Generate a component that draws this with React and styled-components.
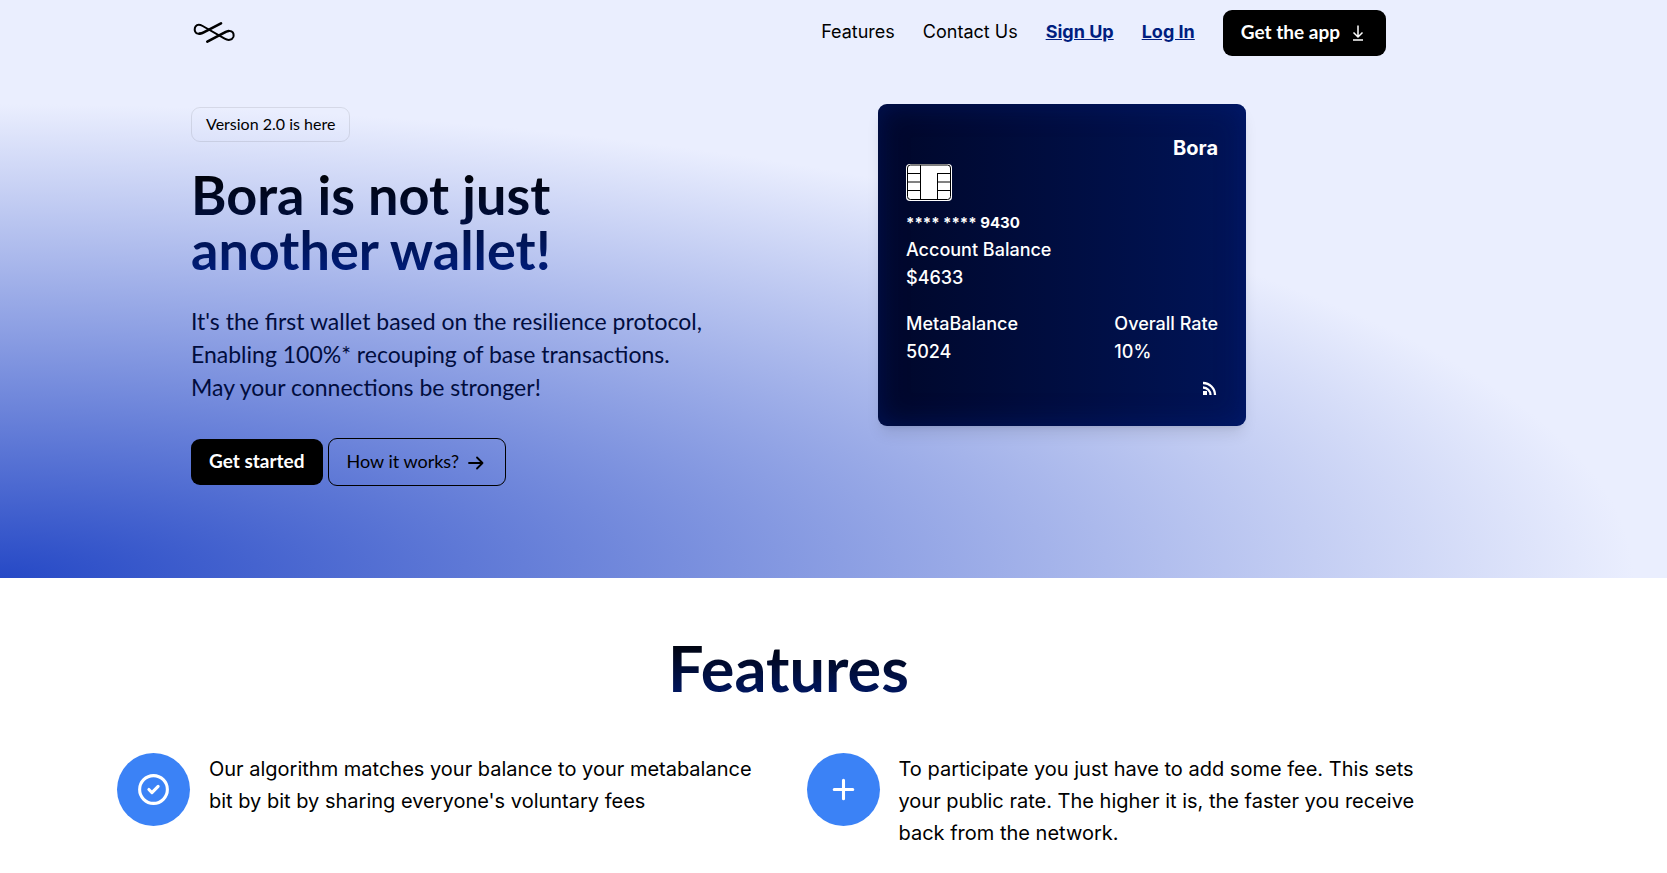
import React from 'react';
import styled, { createGlobalStyle } from 'styled-components';

const GlobalStyle = createGlobalStyle`
  *, *::before, *::after { box-sizing: border-box; }
  body {
    margin: 0;
    background: #fff;
    color: #000;
    font-family: Inter, "Liberation Sans", sans-serif;
  }
  h1, h2, p, dl, dt, dd { margin: 0; }
`;

const displayFont = 'Lato, "Liberation Sans", sans-serif';

const Top = styled.div`
  background: radial-gradient(ellipse 98% 82% at bottom left, #2649c6, #eaeefe);
`;

const Header = styled.header`
  display: flex;
  align-items: center;
  justify-content: space-between;
  padding: 10px 281px 10px 191px;
`;

const LogoLink = styled.a`
  display: flex;
  padding: 0 2px;
  color: #000;
`;

const Nav = styled.nav`
  display: flex;
  align-items: center;
  gap: 28px;
`;

const NavLink = styled.a`
  padding-bottom: 2px;
  color: ${(p) => (p.$strong ? '#001e80' : '#000')};
  font-size: 18px;
  font-weight: ${(p) => (p.$strong ? 700 : 400)};
  line-height: 28px;
  text-decoration: ${(p) => (p.$strong ? 'underline' : 'none')};
  white-space: nowrap;
`;

const Button = styled.button`
  display: inline-flex;
  align-items: center;
  justify-content: center;
  gap: 8px;
  height: ${(p) => (p.$outlined ? '48px' : '46px')};
  padding: 0 18px;
  border: ${(p) => (p.$outlined ? '1px solid #000' : '0')};
  border-radius: 9px;
  background: ${(p) => (p.$outlined ? 'transparent' : '#000')};
  color: ${(p) => (p.$outlined ? '#000' : '#fff')};
  font-family: ${displayFont};
  font-size: ${(p) => (p.$outlined ? '18px' : '19px')};
  font-weight: ${(p) => (p.$outlined ? 400 : 700)};
  white-space: nowrap;
  cursor: pointer;
`;

const ButtonLabel = styled.span`
  padding-bottom: 3px;
`;

const Hero = styled.section`
  display: grid;
  grid-template-columns: 1fr 1fr;
  align-items: start;
  padding: 38px 102px 92px 191px;
`;

const Intro = styled.div`
  display: flex;
  flex-direction: column;
  align-items: flex-start;
  padding-top: 3px;
`;

const Badge = styled.div`
  padding: 0 14px 2px;
  border: 1px solid rgba(34, 34, 34, 0.1);
  border-radius: 9px;
  font-family: ${displayFont};
  font-size: 16px;
  line-height: 31px;
`;

const Title = styled.h1`
  margin-top: 25px;
  background: linear-gradient(to bottom, #000, #001e80);
  background-clip: text;
  color: transparent;
  font-family: ${displayFont};
  font-size: 54px;
  font-weight: 700;
  line-height: 55px;
`;

const Lead = styled.p`
  margin-top: 28px;
  color: #010d3e;
  font-family: ${displayFont};
  font-size: 23px;
  line-height: 33px;
`;

const Actions = styled.div`
  display: flex;
  align-items: center;
  gap: 5px;
  margin-top: 34px;
`;

const Card = styled.article`
  display: flex;
  flex-direction: column;
  width: 368px;
  max-width: 100%;
  padding: 28px;
  border-radius: 9px;
  background: linear-gradient(to right, #00072a, #001458);
  box-shadow:
    inset 0 0 28px rgba(0, 30, 128, 0.5),
    0 10px 15px -3px rgba(0, 0, 0, 0.1),
    0 4px 6px -4px rgba(0, 0, 0, 0.1);
  color: #fff;
`;

const CardBrand = styled.div`
  align-self: flex-end;
  font-size: 20px;
  font-weight: 700;
  line-height: 32px;
`;

const CardNumber = styled.div`
  margin-top: 9px;
  font-size: 15px;
  font-weight: 700;
  line-height: 26px;
`;

const CardRow = styled.dl`
  display: flex;
  justify-content: space-between;
  margin-top: ${(p) => (p.$spaced ? '18px' : '0')};
  font-size: 18px;
  font-weight: 500;
  line-height: 28px;
`;

const CardSignal = styled.div`
  display: flex;
  align-self: flex-end;
  margin-top: 14px;
`;

const Features = styled.section`
  margin-right: 90px;
  padding: 58px 117px 24px;
`;

const SectionTitle = styled.h2`
  width: fit-content;
  margin: 0 auto 53px;
  background: linear-gradient(to bottom, #000, #001e80 120%);
  background-clip: text;
  color: transparent;
  font-family: ${displayFont};
  font-size: 63px;
  font-weight: 700;
  line-height: 64px;
`;

const FeatureGrid = styled.div`
  display: grid;
  grid-template-columns: 1fr 1fr;
  gap: 36px;
`;

const Feature = styled.div`
  display: flex;
  align-items: flex-start;
  gap: 19px;
`;

const FeatureIcon = styled.div`
  display: flex;
  flex: none;
  align-items: center;
  justify-content: center;
  width: 73px;
  height: 73px;
  border-radius: 50%;
  background: #3b82f6;
  color: #fff;
`;

const FeatureText = styled.p`
  max-width: 560px;
  font-size: 20px;
  line-height: 32px;
`;

function Logo() {
  return (
    <svg width="42" height="24" viewBox="38 34 126 72" fill="none" stroke="currentColor" strokeLinecap="round" strokeLinejoin="round" aria-hidden="true">
      <path d="M58 72C44 75 40 60 46 50C51 43 60 45 67 49L133 87C143 93 155 92 159 82C162 71 156 62 145 64" strokeWidth="6" />
      <path d="M122 41L70 68Q64 71 58 72" strokeWidth="8" />
      <path d="M81 96L132 69Q138 65 145 64" strokeWidth="8" />
    </svg>
  );
}

function DownloadIcon() {
  return (
    <svg width="20" height="20" viewBox="0 0 20 20" fill="none" stroke="currentColor" aria-hidden="true">
      <path d="M10 2.5V13.5M5.5 9.5L10 14L14.5 9.5" strokeWidth="1.5" />
      <path d="M5 17H15" strokeWidth="1.5" />
    </svg>
  );
}

function ArrowIcon() {
  return (
    <svg width="20" height="20" viewBox="0 0 20 20" fill="none" stroke="currentColor" strokeWidth="1.8" strokeLinecap="round" strokeLinejoin="round" aria-hidden="true">
      <path d="M2 11H15.5M10 5.5L15.5 11L10 16.5" />
    </svg>
  );
}

function Chip() {
  return (
    <svg width="46" height="37" viewBox="0 0 46 37" fill="none" aria-hidden="true">
      <rect width="46" height="37" rx="4" fill="#fff" />
      <rect x="1.5" y="1" width="43" height="34.5" rx="3" stroke="#000" />
      <path d="M14.5 1V35.5M31.5 9V35.5M1.5 9.5H14.5M1.5 26.5H14.5M31 9.5H44.5M31.5 26.5H44.5" stroke="#000" />
      <path d="M2 18H14M32 18H44" stroke="#808080" strokeWidth="2" />
    </svg>
  );
}

function SignalIcon() {
  return (
    <svg width="18" height="18" viewBox="0 0 18 18" fill="none" stroke="currentColor" strokeWidth="2.3" aria-hidden="true">
      <rect x="3" y="11" width="4" height="4" fill="currentColor" stroke="none" />
      <path d="M3 7.5A7.5 7.5 0 0 1 10.5 15M3 3A12 12 0 0 1 15 15" />
    </svg>
  );
}

function CheckIcon() {
  return (
    <svg width="37" height="37" viewBox="0 0 24 24" fill="none" stroke="currentColor" strokeWidth="2" strokeLinecap="round" strokeLinejoin="round" aria-hidden="true">
      <path d="M9 12l2 2 4-4m6 2a9 9 0 11-18 0 9 9 0 0118 0z" />
    </svg>
  );
}

function PlusIcon() {
  return (
    <svg width="37" height="37" viewBox="0 0 24 24" fill="none" stroke="currentColor" strokeWidth="2" strokeLinecap="round" strokeLinejoin="round" aria-hidden="true">
      <path d="M12 6v12M6 12h12" />
    </svg>
  );
}

const features = [
  {
    Icon: CheckIcon,
    text: "Our algorithm matches your balance to your metabalance bit by bit by sharing everyone's voluntary fees",
  },
  {
    Icon: PlusIcon,
    text: 'To participate you just have to add some fee. This sets your public rate. The higher it is, the faster you receive back from the network.',
  },
];

export default function App() {
  return (
    <>
      <GlobalStyle />
      <Top>
        <Header>
          <LogoLink href="#" aria-label="Bora">
            <Logo />
          </LogoLink>
          <Nav>
            <NavLink href="#features">Features</NavLink>
            <NavLink href="#contact">Contact Us</NavLink>
            <NavLink href="#signup" $strong>Sign Up</NavLink>
            <NavLink href="#login" $strong>Log In</NavLink>
            <Button type="button">
              <ButtonLabel>Get the app</ButtonLabel>
              <DownloadIcon />
            </Button>
          </Nav>
        </Header>
        <Hero>
          <Intro>
            <Badge>Version 2.0 is here</Badge>
            <Title>
              Bora is not just
              <br />
              another wallet!
            </Title>
            <Lead>
              It's the first wallet based on the resilience protocol,
              <br />
              Enabling 100%* recouping of base transactions.
              <br />
              May your connections be stronger!
            </Lead>
            <Actions>
              <Button type="button">
                <ButtonLabel>Get started</ButtonLabel>
              </Button>
              <Button type="button" $outlined>
                <ButtonLabel>How it works?</ButtonLabel>
                <ArrowIcon />
              </Button>
            </Actions>
          </Intro>
          <Card>
            <CardBrand>Bora</CardBrand>
            <Chip />
            <CardNumber>**** **** 9430</CardNumber>
            <CardRow>
              <div>
                <dt>Account Balance</dt>
                <dd>$4633</dd>
              </div>
            </CardRow>
            <CardRow $spaced>
              <div>
                <dt>MetaBalance</dt>
                <dd>5024</dd>
              </div>
              <div>
                <dt>Overall Rate</dt>
                <dd>10%</dd>
              </div>
            </CardRow>
            <CardSignal>
              <SignalIcon />
            </CardSignal>
          </Card>
        </Hero>
      </Top>
      <Features id="features">
        <SectionTitle>Features</SectionTitle>
        <FeatureGrid>
          {features.map(({ Icon, text }) => (
            <Feature key={text}>
              <FeatureIcon>
                <Icon />
              </FeatureIcon>
              <FeatureText>{text}</FeatureText>
            </Feature>
          ))}
        </FeatureGrid>
      </Features>
    </>
  );
}
